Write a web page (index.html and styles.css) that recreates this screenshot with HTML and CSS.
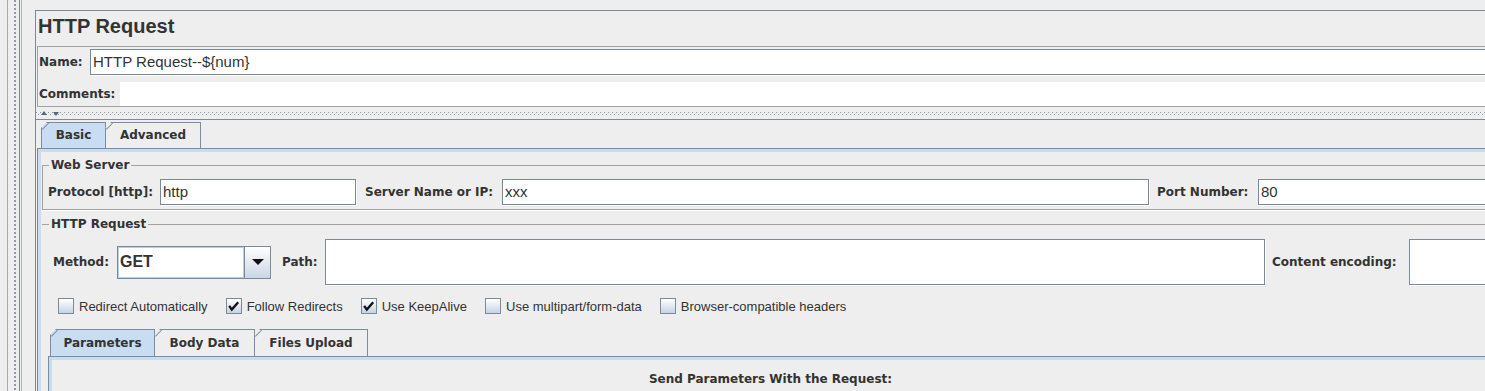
FILE: index.html
```html
<!DOCTYPE html>
<html lang="en">
<head>
    <meta charset="UTF-8">
    <title>HTTP Request</title>
    <link rel="stylesheet" href="styles.css">
</head>
<body>

<div class="app">
    <div class="rail">
        <div class="rail-edge"></div>
        <div class="rail-dots"></div>
        <div class="rail-lines"></div>
    </div>

    <div class="main">
        <div class="title">HTTP Request</div>

        <div class="name-box">
            <div class="name-row">
                <span class="label name-label">Name:</span>
                <div class="field grow">HTTP Request--${num}</div>
            </div>
            <div class="comments-row">
                <span class="label comments-label">Comments:</span>
                <div class="comments-field"></div>
            </div>
        </div>

        <div class="splitter">
            <span class="arrow arrow-up"></span>
            <span class="arrow arrow-down"></span>
        </div>

        <div class="lower">
            <div class="pane outer-pane">
                <div class="tab-row">
                    <div class="tab selected basic-tab">Basic</div>
                    <div class="tab advanced-tab">Advanced</div>
                </div>
                <div class="tab-body outer-body">

                    <fieldset class="group web-server">
                        <legend>Web Server</legend>
                        <div class="row">
                            <span class="label protocol-label">Protocol [http]:</span>
                            <div class="field protocol-field">http</div>
                            <span class="label server-label">Server Name or IP:</span>
                            <div class="field server-field">xxx</div>
                            <span class="label port-label">Port Number:</span>
                            <div class="field grow">80</div>
                        </div>
                    </fieldset>

                    <fieldset class="group http-group">
                        <legend>HTTP Request</legend>
                        <div class="method-row">
                            <span class="label method-label">Method:</span>
                            <div class="combo">
                                <div class="combo-text">GET</div>
                                <div class="combo-btn"><span class="combo-arrow"></span></div>
                            </div>
                            <span class="label path-label">Path:</span>
                            <div class="field tall path-field"></div>
                            <span class="label encoding-label">Content encoding:</span>
                            <div class="field tall grow"></div>
                        </div>

                        <div class="check-row">
                            <label class="check">
                                <span class="check-box"></span>
                                Redirect Automatically
                            </label>
                            <label class="check">
                                <span class="check-box">
                                    <svg width="14" height="14" viewBox="0 0 14 14"><path d="M2.2 6.8 L4.8 10.6 L11.2 3.2" fill="none" stroke="#111" stroke-width="2.3"/></svg>
                                </span>
                                Follow Redirects
                            </label>
                            <label class="check">
                                <span class="check-box">
                                    <svg width="14" height="14" viewBox="0 0 14 14"><path d="M2.2 6.8 L4.8 10.6 L11.2 3.2" fill="none" stroke="#111" stroke-width="2.3"/></svg>
                                </span>
                                Use KeepAlive
                            </label>
                            <label class="check">
                                <span class="check-box"></span>
                                Use multipart/form-data
                            </label>
                            <label class="check">
                                <span class="check-box"></span>
                                Browser-compatible headers
                            </label>
                        </div>

                        <div class="pane inner-pane">
                            <div class="tab-row">
                                <div class="tab selected params-tab">Parameters</div>
                                <div class="tab body-tab">Body Data</div>
                                <div class="tab files-tab">Files Upload</div>
                            </div>
                            <div class="tab-body inner-body">
                                <div class="send-title">Send Parameters With the Request:</div>
                            </div>
                        </div>
                    </fieldset>

                </div>
            </div>
        </div>
    </div>
</div>

</body>
</html>
```

FILE: styles.css
```css
body {
    margin: 0;
    background: #eeeeee;
    font-family: "DejaVu Sans", sans-serif;
    font-size: 12px;
    color: #333333;
    overflow: hidden;
}
.app {
    display: flex;
    width: 1500px;
    height: 391px;
    overflow: hidden;
}

/* left splitter rail */
.rail {
    display: flex;
    flex: none;
    width: 35px;
}
.rail-edge {
    width: 7px;
    border-right: 1px solid #a9a9a9;
}
.rail-dots {
    width: 2px;
    margin-left: 6px;
    background-image: repeating-linear-gradient(to bottom, #8e9aab 0 2px, transparent 2px 4px);
}
.rail-lines {
    width: 1px;
    margin-left: 3px;
    border-left: 1px solid #7a8a99;
    border-right: 1px solid #b4b4b4;
}

.main {
    flex: 1;
    display: flex;
    flex-direction: column;
    margin-top: 10px;
    border-left: 1px solid #7a8a99;
    border-top: 1px solid #7a8a99;
}
.main > * {
    flex-shrink: 0;
}
.title {
    height: 35px;
    padding-left: 2px;
    font-family: "Liberation Sans", Arial, sans-serif;
    font-weight: bold;
    font-size: 20px;
    line-height: 30px;
    color: #333333;
}

.label {
    flex: none;
    font-weight: bold;
    white-space: nowrap;
}
.field {
    flex: none;
    box-sizing: border-box;
    height: 26px;
    padding-left: 2px;
    background: #ffffff;
    border: 1px solid #7a8a99;
    box-shadow: 1px 1px 0 #ffffff;
    font-family: "Liberation Sans", Arial, sans-serif;
    font-size: 15px;
    line-height: 24px;
    color: #333333;
    white-space: nowrap;
}
.field.tall {
    height: 46px;
}
.grow {
    flex: 1;
}

/* name / comments */
.name-box {
    margin-left: 1px;
    border: 1px solid #a3a3a3;
    border-right: none;
}
.name-row {
    display: flex;
    align-items: center;
    padding: 2px 0 0 1px;
}
.name-label {
    width: 51px;
}
.comments-row {
    display: flex;
    align-items: center;
    height: 24px;
    margin-top: 7px;
    padding-left: 1px;
}
.comments-label {
    width: 81px;
}
.comments-field {
    flex: 1;
    height: 24px;
    background: #ffffff;
}

.splitter {
    display: flex;
    height: 12px;
    padding: 4px 0 0 5px;
    box-sizing: border-box;
    background-image:
        linear-gradient(90deg, #8d99a9 1px, transparent 1px),
        linear-gradient(90deg, #8d99a9 1px, transparent 1px);
    background-size: 4px 1px, 4px 1px;
    background-position: 0 5px, 2px 7px;
    background-repeat: repeat-x;
}
.arrow {
    width: 0;
    height: 0;
    border-left: 3px solid transparent;
    border-right: 3px solid transparent;
}
.arrow-up {
    border-bottom: 4px solid #56677c;
}
.arrow-down {
    margin-left: 6px;
    margin-top: 1px;
    border-top: 4px solid #56677c;
}

.lower {
    flex: 1;
    border-top: 1px solid #7a8a99;
}

/* tabbed panes */
.outer-pane {
    margin: 2px 0 0 1px;
}
.tab-row {
    display: flex;
    padding-left: 4px;
}
.tab {
    position: relative;
    box-sizing: border-box;
    height: 26px;
    border: 1px solid #7b8ba0;
    border-bottom: none;
    line-height: 25px;
    text-align: center;
    font-weight: bold;
    background: #eeeeee;
    clip-path: polygon(6px 0, 100% 0, 100% 100%, 0 100%, 0 6px);
}
.tab::before {
    content: "";
    position: absolute;
    left: 0;
    top: 6px;
    width: 9px;
    height: 1px;
    background: #7b8ba0;
    transform-origin: 0 0;
    transform: rotate(-45deg);
}
.tab + .tab {
    margin-left: -1px;
}
.tab.selected {
    background: #c8ddf2;
}
.basic-tab { width: 65px; }
.advanced-tab { width: 96px; }

.tab-body {
    border-top: 1px solid #7b8ba0;
    border-left: 1px solid #7b8ba0;
    box-shadow: inset 3px 3px 0 #c8ddf2;
}
.outer-body {
    height: 300px;
    padding: 9px 0 0 4px;
}

.group {
    margin: 0;
    padding: 0 0 4px 5px;
    min-width: 0;
    border: 1px solid #a3a3a3;
    border-right: none;
    box-shadow: 1px 1px 0 #ffffff;
}
.group legend {
    margin-left: 1px;
    padding: 0 2px;
    font-weight: bold;
    line-height: 14px;
}
.row {
    display: flex;
    align-items: center;
    height: 26px;
    margin-top: 7px;
}
.protocol-label { width: 112px; }
.protocol-field { width: 196px; }
.server-label { width: 137px; padding-left: 9px; }
.server-field { width: 647px; }
.port-label { width: 101px; padding-left: 8px; }

.http-group {
    margin-top: 7px;
    padding: 0;
    border-width: 1px 0 0 0;
    box-shadow: none;
}
.http-group legend {
    margin-left: 7px;
}
.method-row {
    display: flex;
    align-items: center;
    height: 46px;
    margin-top: 8px;
    padding-left: 11px;
}
.method-label { width: 64px; }
.combo {
    flex: none;
    display: flex;
    box-sizing: border-box;
    width: 154px;
    height: 33px;
    border: 1px solid #7a8a99;
    background: #ffffff;
}
.combo-text {
    flex: 1;
    padding-left: 2px;
    box-shadow: inset 0 0 0 1px #b8cfe5;
    font-family: "Liberation Sans", Arial, sans-serif;
    font-weight: bold;
    font-size: 16px;
    line-height: 30px;
    color: #333333;
}
.combo-btn {
    display: flex;
    align-items: center;
    justify-content: center;
    width: 25px;
    border-left: 1px solid #7a8a99;
    background: linear-gradient(#ffffff, #c9d6e6);
}
.combo-arrow {
    width: 0;
    height: 0;
    border-left: 6px solid transparent;
    border-right: 6px solid transparent;
    border-top: 6px solid #111111;
}
.path-label { width: 43px; padding-left: 11px; }
.path-field { width: 940px; }
.encoding-label { width: 137px; padding-left: 7px; }

.check-row {
    display: flex;
    align-items: center;
    height: 16px;
    margin-top: 13px;
    padding-left: 16px;
}
.check {
    display: flex;
    align-items: center;
    margin-right: 18px;
    font-family: "Liberation Sans", Arial, sans-serif;
    font-size: 13px;
    color: #333333;
}
.check-box {
    display: flex;
    align-items: center;
    justify-content: center;
    box-sizing: border-box;
    width: 16px;
    height: 16px;
    margin-right: 5px;
    border: 1px solid #7a8a99;
    background: linear-gradient(#ffffff, #c5d3e4);
}

.inner-pane {
    margin: 15px 8px 0 6px;
}
.inner-pane .tab-row {
    padding-left: 2px;
}
.inner-pane .tab {
    height: 27px;
    line-height: 26px;
}
.params-tab { width: 105px; }
.body-tab { width: 101px; }
.files-tab { width: 114px; }
.inner-body {
    height: 60px;
    padding-top: 15px;
    text-align: center;
}
.send-title {
    font-weight: bold;
    line-height: 14px;
}
```
